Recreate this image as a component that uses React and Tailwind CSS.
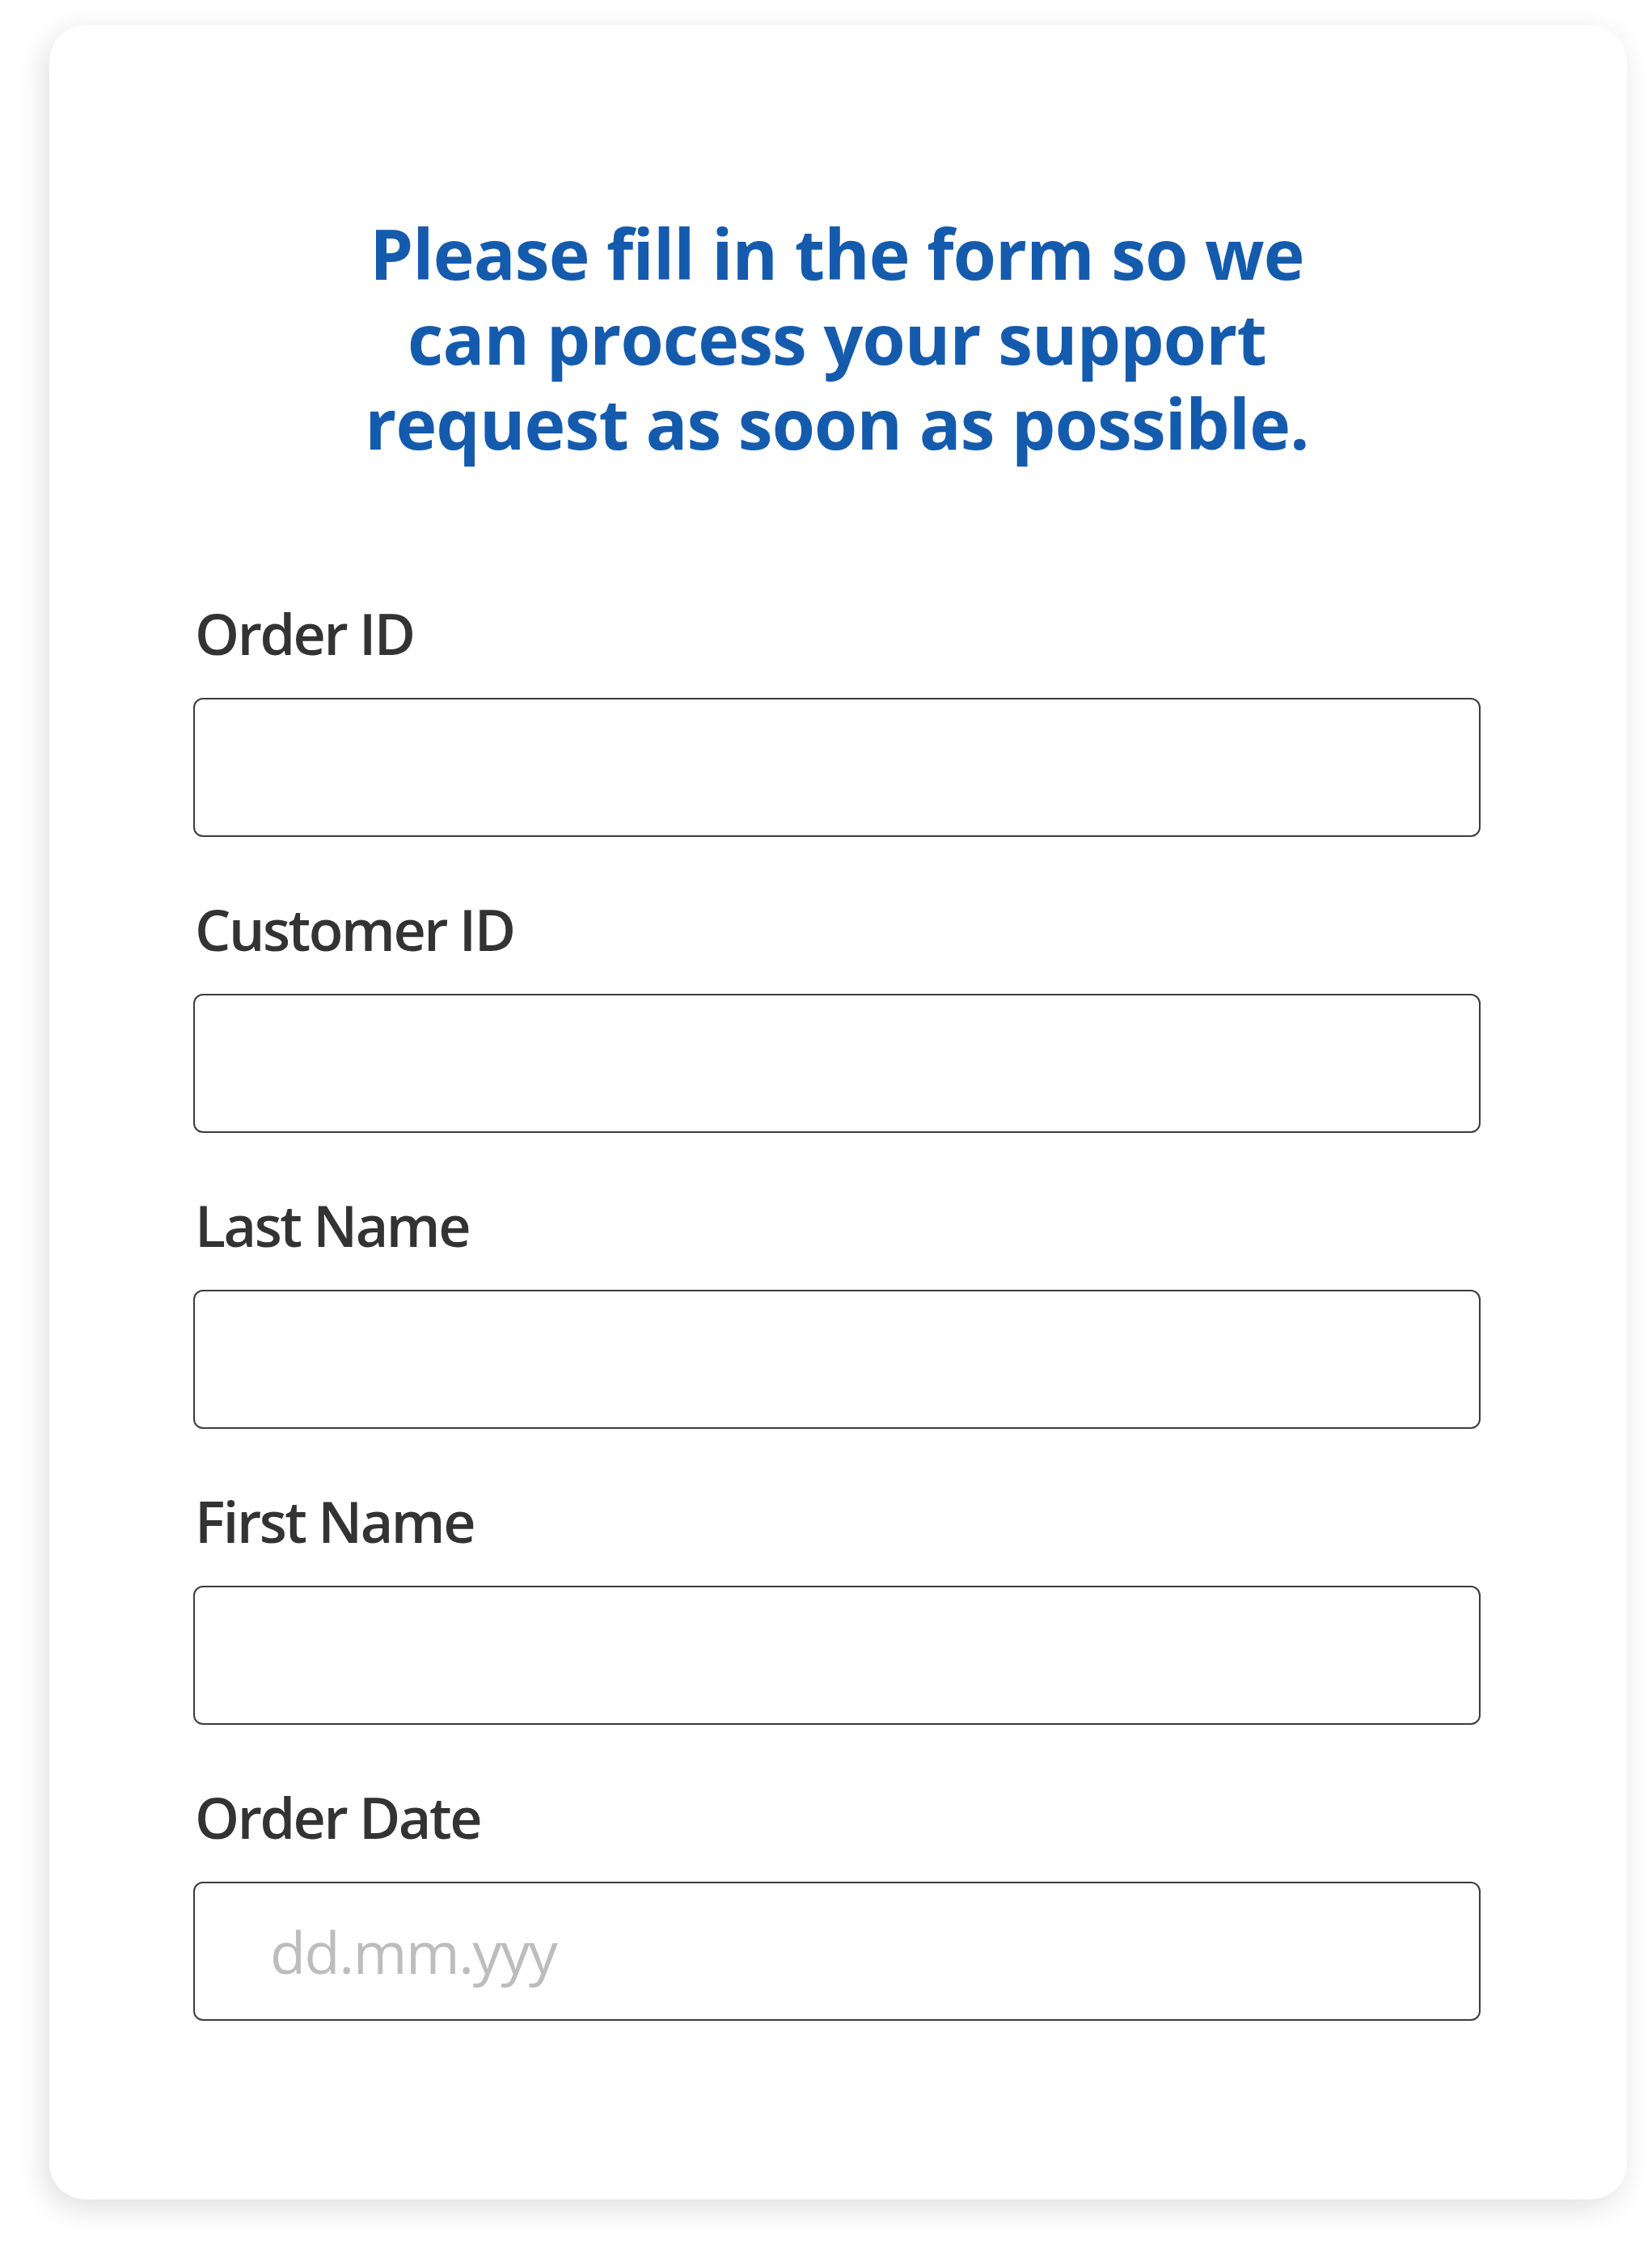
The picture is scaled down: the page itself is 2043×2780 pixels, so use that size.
import React from "react";

const fields = ["Order ID", "Customer ID", "Last Name", "First Name", "Order Date"];

const SupportForm = () => {
  return (
    <div className="min-h-[2780px] w-[2043px] bg-white pt-[31px] pl-[61px] font-['Open_Sans',sans-serif]">
      <div className="w-[1951px] h-[2689px] bg-white rounded-[45px] shadow-[-6px_10px_36px_rgba(0,0,0,0.13)] pt-[229px] pl-[178px]">
        <h1 className="w-[1592px] text-center text-[86px] leading-[105px] font-bold tracking-[-0.01em] text-[#155bad]">
          Please fill in the form so we
          <br />
          can process your support
          <br />
          request as soon as possible.
        </h1>
        <form className="mt-[163px] flex flex-col gap-[69px]">
          {fields.map((label) => (
            <div key={label} className="flex flex-col">
              <label className="h-[90px] pl-[2px] text-[70px] leading-[90px] font-semibold tracking-[-0.035em] text-[#333333]">
                {label}
              </label>
              <input
                type="text"
                placeholder={label === "Order Date" ? "dd.mm.yyy" : ""}
                className="mt-[35px] h-[172px] w-[1592px] rounded-[12px] border-2 border-[#3c3c3c] bg-white pl-[93px] text-[72px] tracking-[-0.02em] text-[#333333] placeholder:text-[#bdbdbd] outline-none"
              />
            </div>
          ))}
        </form>
      </div>
    </div>
  );
};

export default function App() {
  return <SupportForm />;
}
